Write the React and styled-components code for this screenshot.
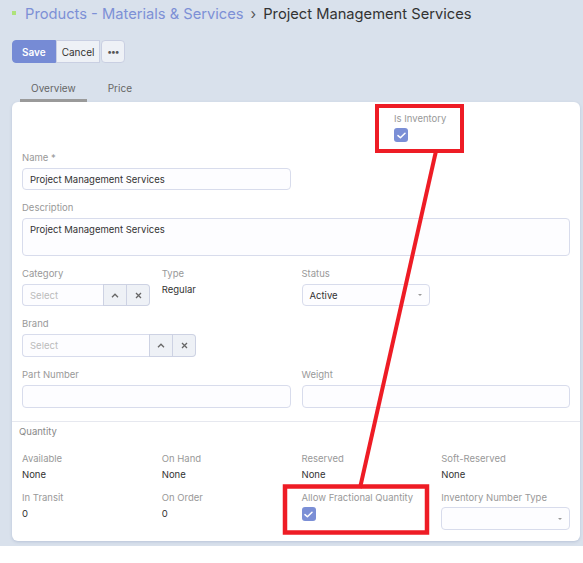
import React from "react";
import styled, { createGlobalStyle } from "styled-components";

const GlobalStyle = createGlobalStyle`
  html, body { margin: 0; padding: 0; background: #ffffff; }
  body { font-family: Inter, "Noto Sans", sans-serif; color: #333; }
  * { box-sizing: border-box; }
`;

const Page = styled.div`
  position: relative;
  background: #d9e1ec;
  padding: 0 3px 5px 12px;
`;

const Header = styled.div`
  height: 28px;
  display: flex;
  align-items: center;
  gap: 9px;
  font-size: 14.7px;
`;

const Dot = styled.span`
  width: 4px;
  height: 4px;
  background: #aee27a;
  margin-top: -2px;
`;

const Crumb = styled.span`
  color: ${(p) => (p.$current ? "#333" : "#7d90d6")};
`;

const Sep = styled.span`
  color: #555;
  margin: 0 -2px;
`;

const Toolbar = styled.div`
  display: flex;
  margin-top: 12px;
  height: 23px;
`;

const Btn = styled.button`
  font-family: Inter, sans-serif;
  font-size: 10px;
  height: 23px;
  padding: 0 ${(p) => p.$pad}px;
  border: 1px solid ${(p) => (p.$primary ? "#768bd5" : "#c9cfe2")};
  background: ${(p) => (p.$primary ? "#768bd5" : "#eef1f6")};
  color: ${(p) => (p.$primary ? "#fff" : "#333")};
  font-weight: ${(p) => (p.$primary ? 600 : 400)};
  border-radius: ${(p) => p.$radius || "0"};
  margin-left: ${(p) => p.$ml || 0}px;
  display: flex;
  align-items: center;
  justify-content: center;
`;

const Dots = styled.span`
  font-size: 9px;
  letter-spacing: -0.5px;
  font-weight: 700;
  color: #555;
`;

const Tabs = styled.div`
  display: flex;
  gap: 10px;
  margin-top: 8px;
  padding-left: 8px;
`;

const Tab = styled.div`
  font-size: 10px;
  line-height: 14px;
  padding: 10px 11px 4px;
  color: #666;
  border-bottom: 3px solid ${(p) => (p.$active ? "#9a9a9a" : "transparent")};
`;

const Card = styled.div`
  background: #fff;
  border-radius: 6px;
  box-shadow: 0 1px 3px rgba(110, 130, 170, 0.3);
`;

const TopSection = styled.div`
  padding: 11px 10px 13px 10px;
`;

const CheckRow = styled.div`
  display: flex;
  padding-left: 372px;
  margin-bottom: 10px;
`;

const Grid = styled.div`
  display: grid;
  grid-template-columns: repeat(4, 1fr);
  column-gap: 11px;
  row-gap: ${(p) => p.$rowGap || 12}px;
`;

const Field = styled.div`
  display: flex;
  flex-direction: column;
  grid-column: span ${(p) => p.$span || 1};
  min-width: 0;
`;

const Label = styled.div`
  font-size: 9.5px;
  line-height: 12px;
  color: #999;
  margin-bottom: ${(p) => p.$gap ?? 4}px;
  white-space: nowrap;
`;

const Value = styled.div`
  font-size: 9.5px;
  line-height: 12px;
  color: #333;
`;

const Input = styled.div`
  height: ${(p) => p.$h || 22}px;
  border: 1px solid #d8dcec;
  border-radius: 4px;
  background: #fdfdff;
  font-size: 9.5px;
  color: #333;
  padding: ${(p) => (p.$multi ? "5px 7px" : "0 7px")};
  display: flex;
  align-items: ${(p) => (p.$multi ? "flex-start" : "center")};
  justify-content: space-between;
`;

const Combo = styled.div`
  display: flex;
  height: ${(p) => p.$h || 22}px;
  width: ${(p) => p.$w}px;
`;

const ComboInput = styled.div`
  flex: 1;
  border: 1px solid #d8dcec;
  border-right: none;
  border-radius: 4px 0 0 4px;
  background: #fdfdff;
  font-size: 9.5px;
  color: #bbb;
  padding: 0 7px;
  display: flex;
  align-items: center;
`;

const ComboBtn = styled.div`
  width: ${(p) => p.$w || 23}px;
  border: 1px solid #cdd2e3;
  border-left: ${(p) => (p.$last ? "none" : "1px solid #cdd2e3")};
  background: #eef1f6;
  border-radius: ${(p) => (p.$last ? "0 4px 4px 0" : "0")};
  display: flex;
  align-items: center;
  justify-content: center;
`;

const Caret = styled.span`
  width: 0;
  height: 0;
  border-left: 2px solid transparent;
  border-right: 2px solid transparent;
  border-top: 2px solid #999;
`;

const Check = styled.div`
  width: 14px;
  height: 14px;
  border-radius: 3px;
  background: #7b8fd6;
  display: flex;
  align-items: center;
  justify-content: center;
`;

const QuantitySection = styled.div`
  border-top: 1px solid #e6e8ef;
  padding: 4px 10px 11px 10px;
`;

const SectionTitle = styled.div`
  font-size: 9.5px;
  line-height: 12px;
  color: #888;
  margin: 0 0 15px -3px;
`;

const Overlay = styled.svg`
  position: absolute;
  left: 0;
  top: 0;
  pointer-events: none;
`;

const CheckIcon = () => (
  <svg width="9" height="7" viewBox="0 0 9 7">
    <path d="M1 3.6 L3.4 5.8 L8 1.2" fill="none" stroke="#fff" strokeWidth="1.5" strokeLinecap="round" strokeLinejoin="round" />
  </svg>
);

const ChevronUp = () => (
  <svg width="8" height="5" viewBox="0 0 8 5">
    <path d="M1 4.2 L4 1.2 L7 4.2" fill="none" stroke="#666" strokeWidth="1.3" />
  </svg>
);

const XIcon = () => (
  <svg width="7" height="7" viewBox="0 0 7 7">
    <path d="M1 1 L6 6 M6 1 L1 6" fill="none" stroke="#666" strokeWidth="1.3" />
  </svg>
);

const ComboField = ({ label, w, h }) => (
  <Field>
    <Label>{label}</Label>
    <Combo $w={w} $h={h}>
      <ComboInput>Select</ComboInput>
      <ComboBtn $w={24}><ChevronUp /></ComboBtn>
      <ComboBtn $last><XIcon /></ComboBtn>
    </Combo>
  </Field>
);

export default function App() {
  return (
    <>
      <GlobalStyle />
      <Page>
        <Header>
          <Dot />
          <Crumb>Products - Materials &amp; Services</Crumb>
          <Sep>›</Sep>
          <Crumb $current>Project Management Services</Crumb>
        </Header>
        <Toolbar>
          <Btn $primary $radius="4px 0 0 4px" $pad={9}>Save</Btn>
          <Btn $pad={5}>Cancel</Btn>
          <Btn $radius="4px" $ml={1} $pad={5}><Dots>•••</Dots></Btn>
        </Toolbar>
        <Tabs>
          <Tab $active>Overview</Tab>
          <Tab>Price</Tab>
        </Tabs>
        <Card>
          <TopSection>
            <CheckRow>
              <Field>
                <Label $gap={3}>Is Inventory</Label>
                <Check><CheckIcon /></Check>
              </Field>
            </CheckRow>
            <Grid>
              <Field $span={2}>
                <Label>Name *</Label>
                <Input>Project Management Services</Input>
              </Field>
              <Field $span={2} />
              <Field $span={4}>
                <Label>Description</Label>
                <Input $h={38} $multi>Project Management Services</Input>
              </Field>
              <ComboField label="Category" w={128} />
              <Field>
                <Label>Type</Label>
                <Value>Regular</Value>
              </Field>
              <Field>
                <Label>Status</Label>
                <Input>Active<Caret /></Input>
              </Field>
              <Field />
              <Field $span={4}>
                <ComboField label="Brand" w={174} h={23} />
              </Field>
              <Field $span={2}>
                <Label>Part Number</Label>
                <Input $h={23} />
              </Field>
              <Field $span={2}>
                <Label>Weight</Label>
                <Input $h={23} />
              </Field>
            </Grid>
          </TopSection>
          <QuantitySection>
            <SectionTitle>Quantity</SectionTitle>
            <Grid $rowGap={11}>
              <Field>
                <Label>Available</Label>
                <Value>None</Value>
              </Field>
              <Field>
                <Label>On Hand</Label>
                <Value>None</Value>
              </Field>
              <Field>
                <Label>Reserved</Label>
                <Value>None</Value>
              </Field>
              <Field>
                <Label>Soft-Reserved</Label>
                <Value>None</Value>
              </Field>
              <Field>
                <Label>In Transit</Label>
                <Value>0</Value>
              </Field>
              <Field>
                <Label>On Order</Label>
                <Value>0</Value>
              </Field>
              <Field>
                <Label $gap={3}>Allow Fractional Quantity</Label>
                <Check><CheckIcon /></Check>
              </Field>
              <Field>
                <Label $gap={3}>Inventory Number Type</Label>
                <Input $h={23}><span /><Caret /></Input>
              </Field>
            </Grid>
          </QuantitySection>
        </Card>
        <Overlay width="583" height="563" viewBox="0 0 583 563">
          <rect x="377" y="106" width="85" height="45" fill="none" stroke="#ee1c25" strokeWidth="4" />
          <line x1="436" y1="151" x2="360" y2="488" stroke="#ee1c25" strokeWidth="4" />
          <rect x="285" y="486.5" width="142" height="46" fill="none" stroke="#ee1c25" strokeWidth="4.5" />
        </Overlay>
      </Page>
    </>
  );
}
